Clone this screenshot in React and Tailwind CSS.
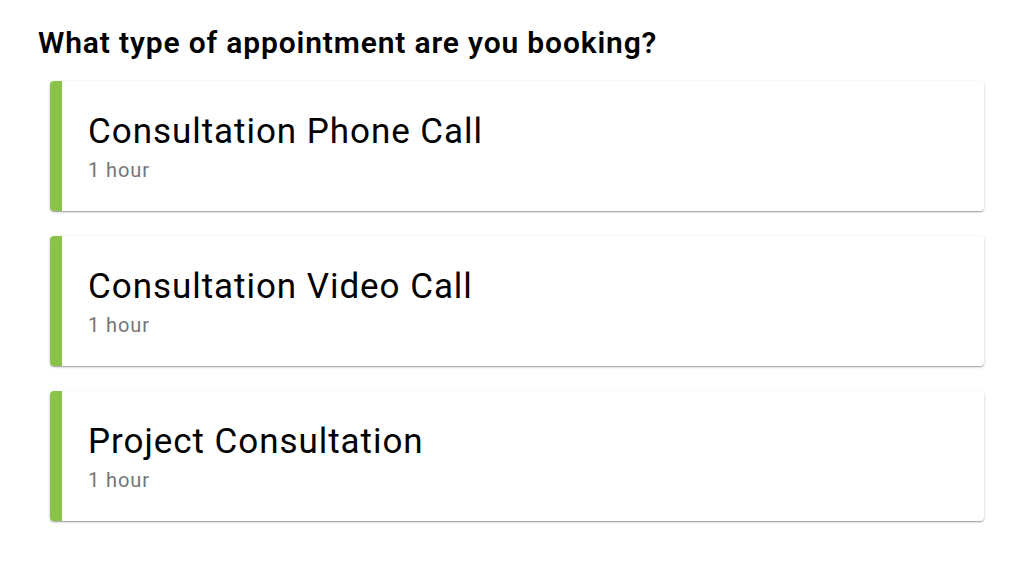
import React from 'react';

const appointments = [
  { name: 'Consultation Phone Call', duration: '1 hour' },
  { name: 'Consultation Video Call', duration: '1 hour' },
  { name: 'Project Consultation', duration: '1 hour' },
];

const App = () => {
  return (
    <div className="min-h-screen bg-white font-['Roboto',sans-serif] pt-[25px] pl-[38px] pr-[40px]">
      <h2 className="text-[30px] leading-[36px] font-semibold tracking-[0.85px] text-black">What type of appointment are you booking?</h2>

      <div className="mt-[20px] ml-[12px] flex flex-col gap-[25px]">
        {appointments.map((a) => (
          <div
            key={a.name}
            className="h-[130px] flex rounded-[4px] bg-white overflow-hidden shadow-[0_1px_3px_rgba(0,0,0,0.2),0_1px_1px_rgba(0,0,0,0.14),0_2px_1px_-1px_rgba(0,0,0,0.12)]"
          >
            <div className="w-[12px] bg-[#8bc34a] shrink-0" />
            <div className="pl-[26px] pt-[27px]">
              <div className="text-[35px] leading-[48px] tracking-[0.95px] text-black">{a.name}</div>
              <div className="mt-[1px] text-[20px] leading-[26px] tracking-[0.9px] text-[#757575]">{a.duration}</div>
            </div>
          </div>
        ))}
      </div>
    </div>
  );
};

export default App;
